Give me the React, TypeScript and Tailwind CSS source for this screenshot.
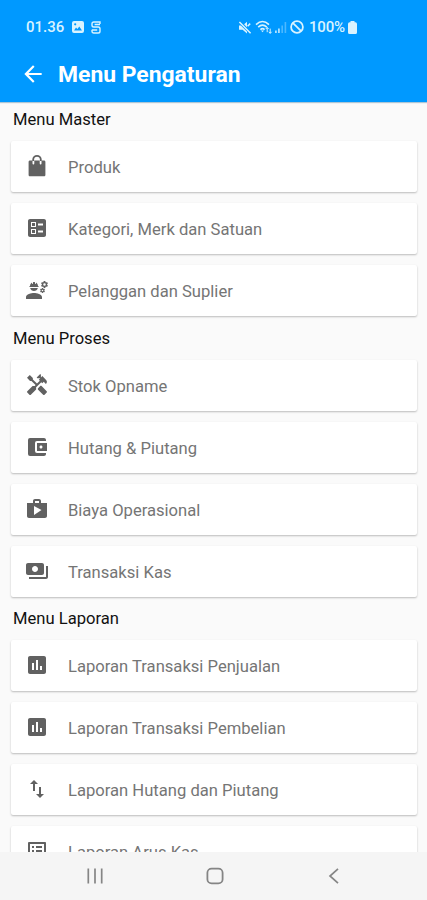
import type { ComponentType } from "react"
import {
    MdAccountBalanceWallet,
    MdArrowBack,
    MdAssessment,
    MdBallot,
    MdEngineering,
    MdHandyman,
    MdListAlt,
    MdPayments,
    MdShop,
    MdSwapVert,
} from "react-icons/md"

type Item = { label: string; icon: ComponentType<{ className?: string }> }
type Section = { title: string; titleClass: string; items: Item[] }

function BagIcon({ className }: { className?: string }) {
    return (
        <svg className={className} viewBox="0 0 24 24" fill="none">
            <path d="M5 6.5h14c.8 0 1.4.6 1.4 1.4v13c0 .8-.6 1.4-1.4 1.4H5c-.8 0-1.4-.6-1.4-1.4v-13c0-.8.6-1.4 1.4-1.4z" fill="currentColor" />
            <path d="M8.4 6.5v3M15.6 6.5v3" stroke="#fff" strokeWidth="1.8" strokeLinecap="round" />
            <path d="M8.2 7V5.6a3.8 3.8 0 0 1 7.6 0V7" stroke="currentColor" strokeWidth="1.8" />
        </svg>
    )
}

const sections: Section[] = [
    {
        title: "Menu Master",
        titleClass: "h-[38px] pb-[3px]",
        items: [
            { label: "Produk", icon: BagIcon },
            { label: "Kategori, Merk dan Satuan", icon: MdBallot },
            { label: "Pelanggan dan Suplier", icon: MdEngineering },
        ],
    },
    {
        title: "Menu Proses",
        titleClass: "h-[44px] pt-[2px]",
        items: [
            { label: "Stok Opname", icon: MdHandyman },
            { label: "Hutang & Piutang", icon: MdAccountBalanceWallet },
            { label: "Biaya Operasional", icon: MdShop },
            { label: "Transaksi Kas", icon: MdPayments },
        ],
    },
    {
        title: "Menu Laporan",
        titleClass: "h-[43px] pt-[2px]",
        items: [
            { label: "Laporan Transaksi Penjualan", icon: MdAssessment },
            { label: "Laporan Transaksi Pembelian", icon: MdAssessment },
            { label: "Laporan Hutang dan Piutang", icon: MdSwapVert },
            { label: "Laporan Arus Kas", icon: MdListAlt },
        ],
    },
]

function StatusBar() {
    return (
        <div className="flex h-[54px] items-center pl-[26px] pr-[70px] text-[15px] text-[#d9f3ff]">
            <span className="w-[39px] whitespace-nowrap font-medium">01.36</span>
            <svg className="ml-[7px] size-3" viewBox="0 0 12 12" fill="currentColor">
                <path
                    fillRule="evenodd"
                    d="M2 0h8a2 2 0 0 1 2 2v8a2 2 0 0 1-2 2H2a2 2 0 0 1-2-2V2a2 2 0 0 1 2-2zm0 9.5h8L7.3 5.6 5.4 8 4 6.4zM3.2 2.2a1.1 1.1 0 1 0 0 2.2 1.1 1.1 0 0 0 0-2.2z"
                />
            </svg>
            <svg className="ml-[7px] h-[13px] w-[10px]" viewBox="0 0 10 13" fill="none" stroke="currentColor" strokeWidth="1.4">
                <path d="M9 3V1H2.8Q1 1 1 2.8v1.4Q1 6 2.8 6h4.4Q9 6 9 7.8v2.4Q9 12 7.2 12H2.8Q1 12 1 10.2V8.8M3.6 3.5H9M1 9h5.2" />
            </svg>
            <div className="ml-auto flex items-center">
                <svg className="h-[13px] w-[14px]" viewBox="0 0 14 13" fill="currentColor">
                    <path d="M1 4.4h1.8L9 10.6v1.8L4.6 8.8H1zM9 .8v5.4L6.1 3.3z" />
                    <path d="m1.4 1 11.2 11.2M9.6 5.2l2.6-2.6" fill="none" stroke="currentColor" strokeWidth="1.5" />
                </svg>
                {/* Wifi with traffic arrows */}
                <svg className="ml-[3px] h-[14px] w-[18px]" viewBox="0 0 18 14" fill="none" stroke="currentColor" strokeWidth="1.6">
                    <path d="M1 4.6Q7.5-1.6 14 4.6M3.2 7.2q4.3-4 8.6 0M5.4 9.6q2.1-2 4.2 0" />
                    <path d="m6 10.5 1.5 1.8L9 10.5z" fill="currentColor" stroke="none" />
                    <path d="M12.2 7.6v4.6M15.2 8.6v4.6M10.8 9l1.4-1.6L13.6 9M13.8 11.8l1.4 1.6 1.4-1.6" strokeWidth="1" />
                </svg>
                <svg className="ml-px h-[12px] w-[13px]" viewBox="0 0 13 12" fill="currentColor">
                    <path d="M1 9.5h1.8V12H1zM4 7.5h1.8V12H4z" opacity=".8" />
                    <path d="M7.4 4.5h1.6V12H7.4zM10.6 1h1.6v11h-1.6z" opacity=".35" />
                </svg>
                <svg className="ml-[3px] size-[14px]" viewBox="0 0 14 14" fill="none" stroke="currentColor" strokeWidth="1.8">
                    <circle cx="7" cy="7" r="5.9" />
                    <path d="m2.8 2.8 8.4 8.4" />
                </svg>
                <span className="ml-[5px] w-[37px] whitespace-nowrap font-medium tracking-[-0.2px]">100%</span>
                <svg className="ml-[2px] h-[13px] w-[9px]" viewBox="0 0 9 13" fill="currentColor">
                    <path d="M2.5 0h4v1.3H7.4A1.6 1.6 0 0 1 9 2.9v8.5A1.6 1.6 0 0 1 7.4 13H1.6A1.6 1.6 0 0 1 0 11.4V2.9a1.6 1.6 0 0 1 1.6-1.6h.9z" />
                </svg>
            </div>
        </div>
    )
}

function MenuCard({ label, icon: Icon }: Item) {
    return (
        <button className="flex h-[51px] w-full shrink-0 items-center rounded-[2px] bg-white pl-[14px] text-left shadow-[0_1px_2px_rgba(0,0,0,0.25)]">
            <Icon className="mb-[2px] size-6 text-[#616161]" />
            <span className="ml-[19px] pt-[3px] text-[16.6px] text-[#757575]">{label}</span>
        </button>
    )
}

function NavigationBar() {
    return (
        <nav className="flex h-12 shrink-0 items-center justify-between bg-[#f5f5f5] pl-[86px] pr-[84px] text-[#858585]">
            <svg className="size-[18px]" viewBox="0 0 18 18" fill="none" stroke="currentColor" strokeWidth="1.7">
                <path d="M2.3 1.5v15M9 1.5v15M15.7 1.5v15" />
            </svg>
            <svg className="size-[18px]" viewBox="0 0 18 18" fill="none" stroke="currentColor" strokeWidth="1.8">
                <rect x="1.4" y="1.6" width="15.2" height="14.8" rx="4.2" />
            </svg>
            <svg className="size-[18px]" viewBox="0 0 18 18" fill="none" stroke="currentColor" strokeWidth="1.7">
                <path d="M13 1.8 5 9l8 7.2" />
            </svg>
        </nav>
    )
}

export default function App() {
    return (
        <div className="flex h-[900px] w-[427px] flex-col overflow-hidden bg-[#fafafa] font-[Roboto,sans-serif]">
            <header className="h-[102px] shrink-0 bg-[#0099ff] shadow-[0_1px_1px_rgba(0,80,130,0.3)]">
                <StatusBar />
                <div className="flex h-[42px] items-center pl-[20px] text-white">
                    <MdArrowBack className="mb-[3px] size-[26px]" />
                    <h1 className="ml-[12px] pt-px text-[22.9px] font-bold leading-none">Menu Pengaturan</h1>
                </div>
            </header>

            <main className="min-h-0 flex-1 overflow-hidden pl-[11px] pr-[10px] pt-px">
                {sections.map((section) => (
                    <section key={section.title}>
                        <h2 className={`flex items-center pl-[2px] text-[16.6px] text-[#111] ${section.titleClass}`}>{section.title}</h2>
                        <div className="flex flex-col gap-[11px]">
                            {section.items.map((item) => (
                                <MenuCard key={item.label} {...item} />
                            ))}
                        </div>
                    </section>
                ))}
            </main>

            <NavigationBar />
        </div>
    )
}
